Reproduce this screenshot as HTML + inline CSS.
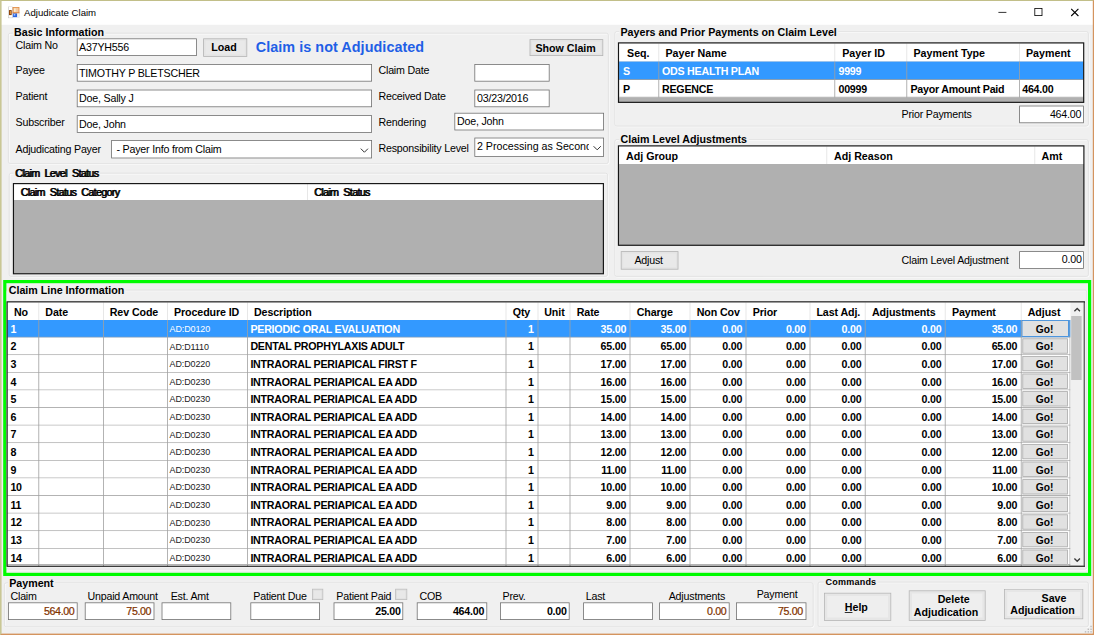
<!DOCTYPE html>
<html><head><meta charset="utf-8"><title>Adjudicate Claim</title>
<style>
html,body{margin:0;padding:0;background:#f0f0f0}
body{width:1094px;height:635px;overflow:hidden;position:relative;font-family:"Liberation Sans",Arial,sans-serif}
#app{position:absolute;left:0;top:0;width:1368px;height:794px;transform:scale(.8);transform-origin:0 0;background:#f0f0f0;font-size:13.33px;color:#000}
#app div,#app span,#app svg{position:absolute;box-sizing:border-box}
#app #frame{left:0;top:0;width:1368px;height:794px;border-top:1px solid #b3b06c;border-left:2px solid #c9c795;border-right:2px solid #d4945e;border-bottom:2px solid #d4945e;pointer-events:none}
.title{left:0;top:0;width:1368px;height:31px;background:#fff}
.t{white-space:pre;line-height:1;}
.n{letter-spacing:-.25px}
.n0{letter-spacing:0}
.b{font-weight:bold}
.bc{letter-spacing:-.3px}
.hd{letter-spacing:-.12px}
.tight{font-weight:normal;letter-spacing:-.78px;word-spacing:3.4px;text-shadow:1px 0 0 #000;-webkit-text-stroke:.3px #000}
.tight2{font-weight:normal;letter-spacing:-.8px;word-spacing:3.4px;text-shadow:1px 0 0 #000;-webkit-text-stroke:.3px #000}
.w{color:#fff}
.br{color:#7c3000;letter-spacing:-.45px;-webkit-text-stroke:.3px #8a3a00}
.cap{background:#f0f0f0;padding:0 2px;margin-left:-2px}
.gb{border:1px solid #dfdfdf;border-radius:3px;box-shadow:1px 1px 0 #fbfbfb, inset 1px 1px 0 #fbfbfb}
.in{background:#fff;border:1px solid #6e6e6e}
.clip{overflow:hidden}
.btn{background:#e9e9e9;border:1px solid #b4b4b4;box-shadow:inset 0 0 0 2px #e4e4e4}
.big{background:#eeeeee;box-shadow:inset 0 0 0 3px #e6e6e6}
.grid{background:#b0b0b0}
.gh{background:#fff}
.hs{background:#e2e2e2}
.vs{background:#a0a0a0}
.row{background:#fff;border-bottom:1px solid #a0a0a0}
.sel{background:#3399ff;color:#fff}
.rows{left:9px;top:400px;width:1347px;height:308px;overflow:hidden}
.lr{left:0;width:100%;font-weight:bold}
.rows .row{margin-top:-400px}
.lr i,.lr b{position:absolute;font-style:normal;white-space:pre;line-height:1;top:5.3px;letter-spacing:-.3px}
.lr .c3{font-weight:normal;font-size:11.2px;top:6.1px;letter-spacing:-.12px;color:#222;margin-left:-1px}
.sel .c3{color:#fff}
.lr .go{text-indent:-1.500px;left:1268.7px;width:57.8px;top:1px;bottom:1px;height:19px;background:#e1e1e1;border:1px solid #adadad;box-sizing:border-box;text-align:center;color:#000;line-height:19.5px;font-size:12.8px;letter-spacing:0}
.sel .go{border:1px solid #2f86dd;top:0;height:21px;margin-left:-1px;width:59.8px;line-height:19.500px;padding-top:1px}
.c0{left:4.0px}
.c1{left:43.1px}
.c2{left:123.7px}
.c3{left:204.0px}
.c4{left:304.0px}
.c5{right:689.0px}
.c6{left:666.8px}
.c7{right:573.4px}
.c8{right:498.4px}
.c9{right:428.4px}
.c10{right:348.8px}
.c11{right:279.3px}
.c12{right:179.3px}
.c13{right:84.6px}
.c14{left:1271.2px}
.sb{background:#f0f0f0}
.thumb{background:#c1c1c1}
.green{border:4px solid #00fb00}
.chk{background:#e8e8e8;border:1px solid #bdbdbd;box-shadow:inset 0 0 0 1px #dcdcdc}
u{text-decoration:underline}
</style></head><body>
<div id="app">
<div class="title"></div>
<svg class="ico" style="left:10px;top:7.700px" width="15" height="15" viewBox="0 0 12 12">
<rect x="0.300" y="0.300" width="4" height="11.200" fill="#fff" stroke="#c2c2c2" stroke-width="0.600"/>
<rect x="1" y="3.700" width="2.700" height="5" fill="#8a3d05"/>
<rect x="1.900" y="4.600" width="0.900" height="3" fill="#f2a23a"/>
<rect x="5" y="1" width="6" height="5.600" fill="#f3c9a0" stroke="#e0893f" stroke-width="0.800"/>
<rect x="6.200" y="2" width="1.300" height="3.400" fill="#fff6d8"/>
<rect x="4.600" y="6.200" width="6.800" height="0.700" fill="#d9702a"/>
<rect x="4.900" y="7.100" width="4.200" height="3.700" fill="#2b63de"/>
<rect x="5.700" y="7.600" width="1.600" height="1.600" fill="#9cc4ff"/>
<rect x="9.300" y="7.200" width="2.200" height="4" fill="#efefef" stroke="#dcdcdc" stroke-width="0.400"/>
</svg>
<span class="t n0" style="left:30.1px;top:9.6px;font-size:12px;">Adjudicate Claim</span>
<svg class="ico" style="left:1230px;top:1px" width="137" height="30" viewBox="0 0 137 30" fill="none" stroke="#000" stroke-width="1">
<path d="M18 14.500h10"/><rect x="63.500" y="9.500" width="9" height="9"/><path d="M109 10l9 9M118 10l-9 9" stroke-width="1.35"/></svg>
<div class="gb" style="left:10px;top:41px;width:751px;height:164px;"></div>
<span class="t b cap" style="left:17.5px;top:34.1px;">Basic Information</span>
<div class="gb" style="left:11px;top:216px;width:749px;height:130px;"></div>
<span class="t b tight cap" style="left:18.8px;top:210.0px;">Claim Level Status</span>
<div class="gb" style="left:768px;top:39px;width:593px;height:119px;"></div>
<span class="t b cap" style="left:775.6px;top:34.3px;">Payers and Prior Payments on Claim Level</span>
<div class="gb" style="left:768px;top:174px;width:593px;height:172px;"></div>
<span class="t b cap" style="left:775.6px;top:167.8px;">Claim Level Adjustments</span>
<span class="t n" style="left:19.4px;top:50.0px;">Claim No</span>
<span class="t n" style="left:19.4px;top:82.1px;">Payee</span>
<span class="t n" style="left:19.4px;top:113.7px;">Patient</span>
<span class="t n" style="left:19.4px;top:146.2px;">Subscriber</span>
<span class="t n" style="left:19.4px;top:180.0px;">Adjudicating Payer</span>
<span class="t n" style="left:473.1px;top:81.8px;">Claim Date</span>
<span class="t n" style="left:473.1px;top:113.7px;">Received Date</span>
<span class="t n" style="left:473.1px;top:145.6px;">Rendering</span>
<span class="t n" style="left:473.1px;top:179.3px;">Responsibility Level</span>
<div class="in" style="left:96px;top:48px;width:150px;height:22px;"></div>
<span class="t n" style="left:98.8px;top:52.7px;">A37YH556</span>
<div class="in" style="left:96px;top:80px;width:369px;height:22px;"></div>
<span class="t n" style="left:98.8px;top:84.6px;">TIMOTHY P BLETSCHER</span>
<div class="in" style="left:96px;top:112px;width:369px;height:22px;"></div>
<span class="t n" style="left:98.8px;top:117.0px;">Doe, Sally J</span>
<div class="in" style="left:96px;top:144px;width:369px;height:22px;"></div>
<span class="t n" style="left:98.8px;top:148.7px;">Doe, John</span>
<div class="in cb" style="left:139px;top:175px;width:326px;height:23px;"></div>
<span class="t n" style="left:145.6px;top:180.0px;">- Payer Info from Claim</span>
<div class="in" style="left:593px;top:80px;width:94px;height:22px;"></div>
<div class="in" style="left:593px;top:112px;width:94px;height:22px;"></div>
<span class="t n" style="left:596.2px;top:116.2px;">03/23/2016</span>
<div class="in" style="left:568px;top:141px;width:187px;height:22px;"></div>
<span class="t n" style="left:571.2px;top:145.0px;">Doe, John</span>
<div class="in cb" style="left:593px;top:172px;width:162px;height:24px;"></div>
<div class="clip" style="left:595px;top:174px;width:141px;height:21px;"><span class="t n" style="left:1.2px;top:3.1px;letter-spacing:0">2 Processing as Second</span></div>
<svg class="ico" style="left:450px;top:185px" width="11" height="7" viewBox="0 0 11 7" fill="none" stroke="#333" stroke-width="1.25"><path d="M1 0.800l4.500 4.500 4.500-4.500"/></svg>
<svg class="ico" style="left:741px;top:182px" width="11" height="7" viewBox="0 0 11 7" fill="none" stroke="#333" stroke-width="1.25"><path d="M1 0.800l4.500 4.500 4.500-4.500"/></svg>
<div class="btn" style="left:254px;top:48px;width:55px;height:23px;"></div>
<span class="t b" style="left:80.1px;width:400px;text-align:center;top:52.8px;">Load</span>
<div class="btn" style="left:662px;top:49px;width:92px;height:21px;"></div>
<span class="t b" style="left:507.0px;width:400px;text-align:center;top:53.7px;">Show Claim</span>
<span class="t b" style="left:319.7px;top:49.8px;font-size:18px;color:#1f5fe6;letter-spacing:.05px">Claim is not Adjudicated</span>
<div class="grid" style="left:17px;top:230px;width:737px;height:112px;"></div>
<div class="gh" style="left:17px;top:230px;width:737px;height:20px;"></div>
<div class="hs" style="left:384px;top:230px;width:1px;height:20px"></div>
<span class="t b tight2" style="left:25.6px;top:234.3px;">Claim Status Category</span>
<span class="t b tight2" style="left:392.5px;top:234.3px;">Claim Status</span>
<div class="grid" style="left:773px;top:54px;width:582px;height:74px;"></div>
<div class="gh" style="left:773px;top:54px;width:582px;height:23px;"></div>
<div class="hs" style="left:823px;top:54px;width:1px;height:23px"></div>
<div class="hs" style="left:1043px;top:54px;width:1px;height:23px"></div>
<div class="hs" style="left:1133px;top:54px;width:1px;height:23px"></div>
<div class="hs" style="left:1274px;top:54px;width:1px;height:23px"></div>
<span class="t b" style="left:783.8px;top:60.0px;">Seq.</span>
<span class="t b" style="left:831.9px;top:60.0px;">Payer Name</span>
<span class="t b" style="left:1052.8px;top:60.0px;">Payer ID</span>
<span class="t b" style="left:1141.9px;top:60.0px;">Payment Type</span>
<span class="t b" style="left:1282.5px;top:60.0px;">Payment</span>
<div class="row sel" style="left:774px;top:77px;width:580px;height:23px;"></div>
<div class="row" style="left:774px;top:100px;width:580px;height:22px;"></div>
<div class="vs" style="left:823px;top:77px;width:1px;height:45px"></div>
<div class="vs" style="left:1043px;top:77px;width:1px;height:45px"></div>
<div class="vs" style="left:1133px;top:77px;width:1px;height:45px"></div>
<div class="vs" style="left:1274px;top:77px;width:1px;height:45px"></div>
<span class="t b bc w" style="left:778.8px;top:82.5px;">S</span>
<span class="t b bc w" style="left:827.5px;top:82.5px;">ODS HEALTH PLAN</span>
<span class="t b bc w" style="left:1048.1px;top:82.5px;">9999</span>
<span class="t b bc" style="left:778.8px;top:104.7px;">P</span>
<span class="t b bc" style="left:827.5px;top:104.7px;">REGENCE</span>
<span class="t b bc" style="left:1048.1px;top:104.7px;">00999</span>
<span class="t b bc" style="left:1138.1px;top:104.7px;">Payor Amount Paid</span>
<span class="t b bc" style="left:1277.8px;top:104.7px;">464.00</span>
<span class="t n" style="left:1126.9px;top:136.5px;">Prior Payments</span>
<div class="in" style="left:1274px;top:132px;width:81px;height:22px;"></div>
<span class="t n" style="right:16.4px;top:136.6px;">464.00</span>
<div class="grid" style="left:773px;top:182px;width:582px;height:125px;"></div>
<div class="gh" style="left:773px;top:182px;width:582px;height:23px;"></div>
<div class="hs" style="left:1033px;top:183px;width:1px;height:22px"></div>
<div class="hs" style="left:1293px;top:183px;width:1px;height:22px"></div>
<span class="t b" style="left:782.5px;top:189.0px;">Adj Group</span>
<span class="t b" style="left:1042.5px;top:189.0px;">Adj Reason</span>
<span class="t b" style="left:1301.9px;top:189.0px;">Amt</span>
<div class="btn" style="left:776px;top:314px;width:72px;height:23px;"></div>
<span class="t n" style="left:610.8px;width:400px;text-align:center;top:319.3px;">Adjust</span>
<span class="t n" style="left:1126.9px;top:319.1px;">Claim Level Adjustment</span>
<div class="in" style="left:1274px;top:314px;width:81px;height:22px;"></div>
<span class="t n" style="right:15.9px;top:318.4px;">0.00</span>
<div class="green" style="left:4px;top:350px;width:1360px;height:370px"></div>
<div class="gb" style="left:8px;top:362px;width:1351px;height:350px;"></div>
<span class="t b cap" style="left:10.9px;top:356.2px;">Claim Line Information</span>
<div class="grid" style="left:9px;top:377px;width:1347px;height:331px;background:#fff"></div>
<div class="gh" style="left:9px;top:377px;width:1347px;height:23px;"></div>
<div class="hs" style="left:48px;top:378px;width:1px;height:22px"></div>
<div class="hs" style="left:129px;top:378px;width:1px;height:22px"></div>
<div class="hs" style="left:209px;top:378px;width:1px;height:22px"></div>
<div class="hs" style="left:309px;top:378px;width:1px;height:22px"></div>
<div class="hs" style="left:632px;top:378px;width:1px;height:22px"></div>
<div class="hs" style="left:672px;top:378px;width:1px;height:22px"></div>
<div class="hs" style="left:712px;top:378px;width:1px;height:22px"></div>
<div class="hs" style="left:787px;top:378px;width:1px;height:22px"></div>
<div class="hs" style="left:862px;top:378px;width:1px;height:22px"></div>
<div class="hs" style="left:932px;top:378px;width:1px;height:22px"></div>
<div class="hs" style="left:1012px;top:378px;width:1px;height:22px"></div>
<div class="hs" style="left:1081px;top:378px;width:1px;height:22px"></div>
<div class="hs" style="left:1181px;top:378px;width:1px;height:22px"></div>
<div class="hs" style="left:1276px;top:378px;width:1px;height:22px"></div>
<span class="t b hd" style="left:17.5px;top:383.7px;">No</span>
<span class="t b hd" style="left:56.6px;top:383.7px;">Date</span>
<span class="t b hd" style="left:137.2px;top:383.7px;">Rev Code</span>
<span class="t b hd" style="left:217.5px;top:383.7px;">Procedure ID</span>
<span class="t b hd" style="left:317.5px;top:383.7px;">Description</span>
<span class="t b hd" style="left:640.9px;top:383.7px;">Qty</span>
<span class="t b hd" style="left:680.3px;top:383.7px;">Unit</span>
<span class="t b hd" style="left:720.9px;top:383.7px;">Rate</span>
<span class="t b hd" style="left:795.9px;top:383.7px;">Charge</span>
<span class="t b hd" style="left:870.9px;top:383.7px;">Non Cov</span>
<span class="t b hd" style="left:940.9px;top:383.7px;">Prior</span>
<span class="t b hd" style="left:1020.5px;top:383.7px;">Last Adj.</span>
<span class="t b hd" style="left:1090.0px;top:383.7px;">Adjustments</span>
<span class="t b hd" style="left:1190.0px;top:383.7px;">Payment</span>
<span class="t b hd" style="left:1284.7px;top:383.7px;">Adjust</span>
<div class="rows"><div class="row lr sel" style="top:400px;height:22px"><i class="c0 ">1</i><i class="c3 ">AD:D0120</i><i class="c4 ">PERIODIC ORAL EVALUATION</i><i class="c5 ">1</i><i class="c7 ">35.00</i><i class="c8 ">35.00</i><i class="c9 ">0.00</i><i class="c10 ">0.00</i><i class="c11 ">0.00</i><i class="c12 ">0.00</i><i class="c13 ">35.00</i><b class="go">Go!</b></div><div class="row lr" style="top:422px;height:22px"><i class="c0 ">2</i><i class="c3 ">AD:D1110</i><i class="c4 ">DENTAL PROPHYLAXIS ADULT</i><i class="c5 ">1</i><i class="c7 ">65.00</i><i class="c8 ">65.00</i><i class="c9 ">0.00</i><i class="c10 ">0.00</i><i class="c11 ">0.00</i><i class="c12 ">0.00</i><i class="c13 ">65.00</i><b class="go">Go!</b></div><div class="row lr" style="top:444px;height:22px"><i class="c0 ">3</i><i class="c3 ">AD:D0220</i><i class="c4 ">INTRAORAL PERIAPICAL FIRST F</i><i class="c5 ">1</i><i class="c7 ">17.00</i><i class="c8 ">17.00</i><i class="c9 ">0.00</i><i class="c10 ">0.00</i><i class="c11 ">0.00</i><i class="c12 ">0.00</i><i class="c13 ">17.00</i><b class="go">Go!</b></div><div class="row lr" style="top:466px;height:22px"><i class="c0 ">4</i><i class="c3 ">AD:D0230</i><i class="c4 ">INTRAORAL PERIAPICAL EA ADD</i><i class="c5 ">1</i><i class="c7 ">16.00</i><i class="c8 ">16.00</i><i class="c9 ">0.00</i><i class="c10 ">0.00</i><i class="c11 ">0.00</i><i class="c12 ">0.00</i><i class="c13 ">16.00</i><b class="go">Go!</b></div><div class="row lr" style="top:488px;height:22px"><i class="c0 ">5</i><i class="c3 ">AD:D0230</i><i class="c4 ">INTRAORAL PERIAPICAL EA ADD</i><i class="c5 ">1</i><i class="c7 ">15.00</i><i class="c8 ">15.00</i><i class="c9 ">0.00</i><i class="c10 ">0.00</i><i class="c11 ">0.00</i><i class="c12 ">0.00</i><i class="c13 ">15.00</i><b class="go">Go!</b></div><div class="row lr" style="top:510px;height:22px"><i class="c0 ">6</i><i class="c3 ">AD:D0230</i><i class="c4 ">INTRAORAL PERIAPICAL EA ADD</i><i class="c5 ">1</i><i class="c7 ">14.00</i><i class="c8 ">14.00</i><i class="c9 ">0.00</i><i class="c10 ">0.00</i><i class="c11 ">0.00</i><i class="c12 ">0.00</i><i class="c13 ">14.00</i><b class="go">Go!</b></div><div class="row lr" style="top:532px;height:22px"><i class="c0 ">7</i><i class="c3 ">AD:D0230</i><i class="c4 ">INTRAORAL PERIAPICAL EA ADD</i><i class="c5 ">1</i><i class="c7 ">13.00</i><i class="c8 ">13.00</i><i class="c9 ">0.00</i><i class="c10 ">0.00</i><i class="c11 ">0.00</i><i class="c12 ">0.00</i><i class="c13 ">13.00</i><b class="go">Go!</b></div><div class="row lr" style="top:554px;height:22px"><i class="c0 ">8</i><i class="c3 ">AD:D0230</i><i class="c4 ">INTRAORAL PERIAPICAL EA ADD</i><i class="c5 ">1</i><i class="c7 ">12.00</i><i class="c8 ">12.00</i><i class="c9 ">0.00</i><i class="c10 ">0.00</i><i class="c11 ">0.00</i><i class="c12 ">0.00</i><i class="c13 ">12.00</i><b class="go">Go!</b></div><div class="row lr" style="top:576px;height:22px"><i class="c0 ">9</i><i class="c3 ">AD:D0230</i><i class="c4 ">INTRAORAL PERIAPICAL EA ADD</i><i class="c5 ">1</i><i class="c7 ">11.00</i><i class="c8 ">11.00</i><i class="c9 ">0.00</i><i class="c10 ">0.00</i><i class="c11 ">0.00</i><i class="c12 ">0.00</i><i class="c13 ">11.00</i><b class="go">Go!</b></div><div class="row lr" style="top:598px;height:22px"><i class="c0 ">10</i><i class="c3 ">AD:D0230</i><i class="c4 ">INTRAORAL PERIAPICAL EA ADD</i><i class="c5 ">1</i><i class="c7 ">10.00</i><i class="c8 ">10.00</i><i class="c9 ">0.00</i><i class="c10 ">0.00</i><i class="c11 ">0.00</i><i class="c12 ">0.00</i><i class="c13 ">10.00</i><b class="go">Go!</b></div><div class="row lr" style="top:620px;height:22px"><i class="c0 ">11</i><i class="c3 ">AD:D0230</i><i class="c4 ">INTRAORAL PERIAPICAL EA ADD</i><i class="c5 ">1</i><i class="c7 ">9.00</i><i class="c8 ">9.00</i><i class="c9 ">0.00</i><i class="c10 ">0.00</i><i class="c11 ">0.00</i><i class="c12 ">0.00</i><i class="c13 ">9.00</i><b class="go">Go!</b></div><div class="row lr" style="top:642px;height:22px"><i class="c0 ">12</i><i class="c3 ">AD:D0230</i><i class="c4 ">INTRAORAL PERIAPICAL EA ADD</i><i class="c5 ">1</i><i class="c7 ">8.00</i><i class="c8 ">8.00</i><i class="c9 ">0.00</i><i class="c10 ">0.00</i><i class="c11 ">0.00</i><i class="c12 ">0.00</i><i class="c13 ">8.00</i><b class="go">Go!</b></div><div class="row lr" style="top:664px;height:22px"><i class="c0 ">13</i><i class="c3 ">AD:D0230</i><i class="c4 ">INTRAORAL PERIAPICAL EA ADD</i><i class="c5 ">1</i><i class="c7 ">7.00</i><i class="c8 ">7.00</i><i class="c9 ">0.00</i><i class="c10 ">0.00</i><i class="c11 ">0.00</i><i class="c12 ">0.00</i><i class="c13 ">7.00</i><b class="go">Go!</b></div><div class="row lr" style="top:686px;height:20px"><i class="c0 ">14</i><i class="c3 ">AD:D0230</i><i class="c4 ">INTRAORAL PERIAPICAL EA ADD</i><i class="c5 ">1</i><i class="c7 ">6.00</i><i class="c8 ">6.00</i><i class="c9 ">0.00</i><i class="c10 ">0.00</i><i class="c11 ">0.00</i><i class="c12 ">0.00</i><i class="c13 ">6.00</i><b class="go">Go!</b></div></div>
<div class="vs" style="left:48px;top:400px;width:1px;height:308px"></div>
<div class="vs" style="left:129px;top:400px;width:1px;height:308px"></div>
<div class="vs" style="left:209px;top:400px;width:1px;height:308px"></div>
<div class="vs" style="left:309px;top:400px;width:1px;height:308px"></div>
<div class="vs" style="left:632px;top:400px;width:1px;height:308px"></div>
<div class="vs" style="left:672px;top:400px;width:1px;height:308px"></div>
<div class="vs" style="left:712px;top:400px;width:1px;height:308px"></div>
<div class="vs" style="left:787px;top:400px;width:1px;height:308px"></div>
<div class="vs" style="left:862px;top:400px;width:1px;height:308px"></div>
<div class="vs" style="left:932px;top:400px;width:1px;height:308px"></div>
<div class="vs" style="left:1012px;top:400px;width:1px;height:308px"></div>
<div class="vs" style="left:1081px;top:400px;width:1px;height:308px"></div>
<div class="vs" style="left:1181px;top:400px;width:1px;height:308px"></div>
<div class="vs" style="left:1276px;top:400px;width:1px;height:308px"></div>
<div class="vs" style="left:1337px;top:400px;width:1px;height:308px"></div>
<div class="sb" style="left:1338px;top:377px;width:18px;height:331px;"></div>
<div class="thumb" style="left:1339px;top:395px;width:13px;height:80px;"></div>
<svg class="ico" style="left:1342px;top:384px" width="9" height="6" viewBox="0 0 9 6" fill="none" stroke="#3a3a3a" stroke-width="1.700"><path d="M1 5l3.500-3.500 3.500 3.500"/></svg>
<svg class="ico" style="left:1342px;top:697px" width="9" height="6" viewBox="0 0 9 6" fill="none" stroke="#3a3a3a" stroke-width="1.700"><path d="M1 1l3.500 3.500 3.500-3.500"/></svg>
<div class="gb" style="left:5px;top:728px;width:1012px;height:56px;"></div>
<span class="t b cap" style="left:11.5px;top:722.5px;">Payment</span>
<span class="t n" style="left:13.1px;top:739.0px;">Claim</span>
<span class="t n" style="left:109.4px;top:739.0px;">Unpaid Amount</span>
<span class="t n" style="left:213.4px;top:739.0px;">Est. Amt</span>
<span class="t n" style="left:316.6px;top:739.0px;">Patient Due</span>
<span class="t n" style="left:420.3px;top:739.0px;">Patient Paid</span>
<span class="t n" style="left:524.4px;top:739.0px;">COB</span>
<span class="t n" style="left:628.1px;top:739.0px;">Prev.</span>
<span class="t n" style="left:732.2px;top:739.0px;">Last</span>
<span class="t n" style="left:835.9px;top:739.0px;">Adjustments</span>
<span class="t n" style="left:945.9px;top:736.7px;">Payment</span>
<div class="in" style="left:10px;top:753px;width:87px;height:22px;"></div>
<span class="t br" style="right:1275.0px;top:757.7px;">564.00</span>
<div class="in" style="left:106px;top:753px;width:87px;height:22px;"></div>
<span class="t br" style="right:1179.0px;top:757.7px;">75.00</span>
<div class="in" style="left:202px;top:753px;width:87px;height:22px;"></div>
<div class="in" style="left:313px;top:753px;width:87px;height:22px;"></div>
<div class="in" style="left:417px;top:753px;width:87px;height:22px;"></div>
<span class="t b bc" style="right:867.1px;top:757.7px;">25.00</span>
<div class="in" style="left:521px;top:753px;width:88px;height:22px;"></div>
<span class="t b bc" style="right:762.9px;top:757.7px;">464.00</span>
<div class="in" style="left:625px;top:753px;width:87px;height:22px;"></div>
<span class="t b bc" style="right:659.6px;top:757.7px;">0.00</span>
<div class="in" style="left:729px;top:753px;width:87px;height:22px;"></div>
<div class="in" style="left:824px;top:753px;width:88px;height:22px;"></div>
<span class="t br" style="right:460.0px;top:757.7px;">0.00</span>
<div class="in" style="left:920px;top:753px;width:88px;height:22px;"></div>
<span class="t br" style="right:364.5px;top:757.7px;">75.00</span>
<div class="chk" style="left:390px;top:736px;width:14px;height:14px;"></div>
<div class="chk" style="left:494px;top:736px;width:15px;height:14px;"></div>
<div class="gb" style="left:1022px;top:727px;width:339px;height:57px;"></div>
<span class="t b cap" style="left:1031.9px;top:722.2px;font-size:11.3px;letter-spacing:.25px">Commands</span>
<div class="btn big" style="left:1030px;top:741px;width:84px;height:35px;"></div>
<span class="t b" style="left:870.4px;width:400px;text-align:center;top:752.7px;"><u>H</u>elp</span>
<div class="btn big" style="left:1136px;top:738px;width:96px;height:38px;"></div>
<span class="t b" style="left:992.1px;width:400px;text-align:center;top:743.0px;">Delete</span>
<span class="t b" style="left:982.5px;width:400px;text-align:center;top:759.0px;">Adjudication</span>
<div class="btn big" style="left:1255px;top:736px;width:99px;height:38px;"></div>
<span class="t b" style="left:1117.5px;width:400px;text-align:center;top:741.0px;">Save</span>
<span class="t b" style="left:1103.1px;width:400px;text-align:center;top:756.8px;">Adjudication</span>
<svg class="ico" style="left:1350px;top:778px" width="16" height="14" viewBox="0 0 16 14" fill="#bdbdbd"><rect x="12.9" y="4.2" width="1.800" height="1.800"/><rect x="9.5" y="7.7" width="1.800" height="1.800"/><rect x="12.9" y="7.7" width="1.800" height="1.800"/><rect x="6.0" y="10.9" width="1.800" height="1.800"/><rect x="9.5" y="10.9" width="1.800" height="1.800"/><rect x="12.9" y="10.9" width="1.800" height="1.800"/></svg>
<svg class="ico" style="left:13px;top:226px" width="746" height="121"><rect x="3.81" y="3.50" width="737.44" height="112.69" fill="none" stroke="#151515" stroke-width="1.45"/></svg>
<svg class="ico" style="left:770px;top:50px" width="589" height="82"><rect x="3.12" y="3.62" width="581.50" height="74.31" fill="none" stroke="#151515" stroke-width="1.45"/></svg>
<svg class="ico" style="left:770px;top:179px" width="589" height="132"><rect x="3.06" y="3.38" width="581.81" height="124.19" fill="none" stroke="#151515" stroke-width="1.45"/></svg>
<svg class="ico" style="left:5px;top:374px" width="1355" height="338"><rect x="3.88" y="3.31" width="1346.62" height="330.50" fill="none" stroke="#151515" stroke-width="1.45"/><path d="M1350.50 4.04V333.09" stroke="#6b6b6b" stroke-width="1.45"/></svg>
<div id="frame"></div>
</div>
</body></html>
